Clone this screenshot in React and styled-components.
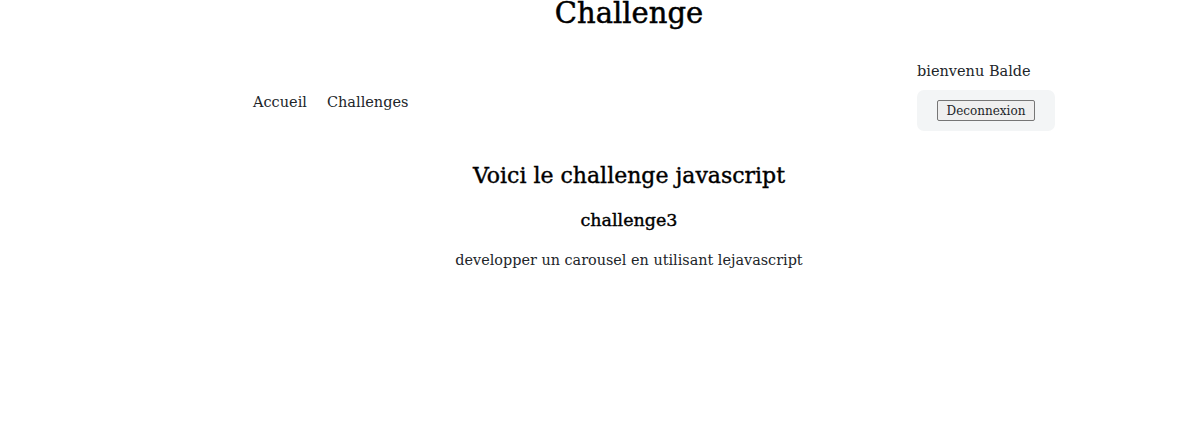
import styled, { createGlobalStyle } from "styled-components";

const GlobalStyle = createGlobalStyle`
  html, body {
    margin: 0;
    padding: 0;
    background: #fff;
  }
  body {
    font-family: "DejaVu Serif", "Liberation Serif", serif;
    color: #212529;
  }
`;

const Page = styled.div`
  margin-left: 76px;
  display: flex;
  flex-direction: column;
`;

const Title = styled.h1`
  margin: 0;
  margin-top: -7px;
  height: 40px;
  text-align: center;
  font-size: 29px;
  font-weight: 500;
  line-height: 40px;
  color: #000;
  -webkit-text-stroke: 0.5px #000;
`;

const Nav = styled.nav`
  display: flex;
  justify-content: space-between;
  align-items: flex-start;
  padding: 0 127px 0 177px;
  margin-top: 28px;
`;

const NavLinks = styled.div`
  display: flex;
  gap: 20px;
  margin-top: 31px;
`;

const NavLink = styled.a`
  color: #212529;
  text-decoration: none;
  font-size: 14.5px;
  line-height: 20px;
`;

const UserBox = styled.div`
  display: flex;
  flex-direction: column;
  width: 138px;
`;

const Welcome = styled.span`
  font-size: 14.5px;
  line-height: 20px;
  margin-bottom: 9px;
`;

const LogoutPanel = styled.div`
  background: #f3f5f6;
  border-radius: 7px;
  height: 41px;
  display: flex;
  align-items: center;
  padding-left: 20px;
`;

const LogoutButton = styled.button`
  font-family: inherit;
  font-size: 12px;
  color: #212529;
  background: #efefef;
  border: 1px solid #767676;
  border-radius: 2px;
  height: 21px;
  width: 98px;
  padding: 0;
`;

const Main = styled.main`
  display: flex;
  flex-direction: column;
  align-items: center;
  margin-top: 28px;
`;

const Heading = styled.h2`
  margin: 0;
  font-size: 22px;
  font-weight: 500;
  line-height: 34px;
  color: #000;
  -webkit-text-stroke: 0.4px #000;
`;

const SubHeading = styled.h3`
  margin: 15px 0 0;
  font-size: 17.5px;
  font-weight: 500;
  line-height: 24px;
  color: #000;
  -webkit-text-stroke: 0.4px #000;
`;

const Description = styled.p`
  margin: 18px 0 0;
  font-size: 14.4px;
  line-height: 20px;
`;

export default function App() {
  return (
    <>
      <GlobalStyle />
      <Page>
        <Title>Challenge</Title>
        <Nav>
          <NavLinks>
            <NavLink href="#">Accueil</NavLink>
            <NavLink href="#">Challenges</NavLink>
          </NavLinks>
          <UserBox>
            <Welcome>bienvenu Balde</Welcome>
            <LogoutPanel>
              <LogoutButton>Deconnexion</LogoutButton>
            </LogoutPanel>
          </UserBox>
        </Nav>
        <Main>
          <Heading>Voici le challenge javascript</Heading>
          <SubHeading>challenge3</SubHeading>
          <Description>developper un carousel en utilisant lejavascript</Description>
        </Main>
      </Page>
    </>
  );
}
